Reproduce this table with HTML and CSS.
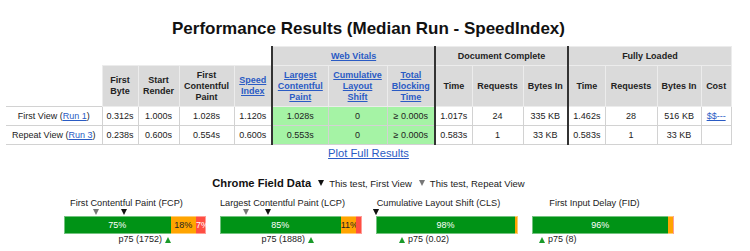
FILE: index.html
```html
<!DOCTYPE html>
<html>
<head>
<meta charset="utf-8">
<link rel="stylesheet" href="styles.css">
</head>
<body>
<div class="page">
  <h1 class="title">Performance Results (Median Run - SpeedIndex)</h1>
  <table class="results">
    <colgroup>
      <col class="w-label"><col class="w-fb"><col class="w-sr"><col class="w-fcp"><col class="w-si">
      <col class="w-lcp"><col class="w-cls"><col class="w-tbt">
      <col class="w-time"><col class="w-req"><col class="w-bytes">
      <col class="w-time2"><col class="w-req2"><col class="w-bytes2"><col class="w-cost">
    </colgroup>
    <thead>
      <tr class="group-row">
        <th class="blank" colspan="5"></th>
        <th class="group sep" colspan="3"><a href="#">Web Vitals</a></th>
        <th class="group sep" colspan="3">Document Complete</th>
        <th class="group sep" colspan="4">Fully Loaded</th>
      </tr>
      <tr class="head-row">
        <th class="blank"></th>
        <th>First<br>Byte</th>
        <th>Start<br>Render</th>
        <th>First<br>Contentful<br>Paint</th>
        <th><a href="#">Speed<br>Index</a></th>
        <th class="sep"><a href="#">Largest<br>Contentful<br>Paint</a></th>
        <th><a href="#">Cumulative<br>Layout<br>Shift</a></th>
        <th><a href="#">Total<br>Blocking<br>Time</a></th>
        <th class="sep">Time</th>
        <th>Requests</th>
        <th>Bytes In</th>
        <th class="sep">Time</th>
        <th>Requests</th>
        <th>Bytes In</th>
        <th>Cost</th>
      </tr>
    </thead>
    <tbody>
      <tr>
        <td class="label">First View (<a href="#">Run 1</a>)</td>
        <td>0.312s</td><td>1.000s</td><td>1.028s</td><td>1.120s</td>
        <td class="sep good">1.028s</td><td class="good">0</td><td class="good">&ge; 0.000s</td>
        <td class="sep">1.017s</td><td>24</td><td>335 KB</td>
        <td class="sep">1.462s</td><td>28</td><td>516 KB</td><td><a href="#">$$---</a></td>
      </tr>
      <tr>
        <td class="label">Repeat View (<a href="#">Run 3</a>)</td>
        <td>0.238s</td><td>0.600s</td><td>0.554s</td><td>0.600s</td>
        <td class="sep good">0.553s</td><td class="good">0</td><td class="good">&ge; 0.000s</td>
        <td class="sep">0.583s</td><td>1</td><td>33 KB</td>
        <td class="sep">0.583s</td><td>1</td><td>33 KB</td><td></td>
      </tr>
    </tbody>
  </table>
  <div class="plot"><a href="#">Plot Full Results</a></div>

  <div class="field-head">
    <span class="field-title">Chrome Field Data</span>
    <span class="legend"><span class="tri-down dark"></span>This test, First View</span>
    <span class="legend"><span class="tri-down grey"></span>This test, Repeat View</span>
  </div>

  <div class="metrics">
    <div class="metric">
      <div class="m-title">First Contentful Paint (FCP)</div>
      <div class="m-body">
        <div class="markers">
          <span class="tri-down grey mk" style="left:32px"></span>
          <span class="tri-down dark mk" style="left:60px"></span>
        </div>
        <div class="bar">
          <div class="seg good-seg" style="width:75%">75%</div>
          <div class="seg avg-seg" style="width:18%">18%</div>
          <div class="seg poor-seg" style="width:7%">7%</div>
        </div>
        <div class="p75row">
          <span class="p75" style="right:35px">p75 (1752)<span class="tri-up"></span></span>
        </div>
      </div>
    </div>
    <div class="metric">
      <div class="m-title">Largest Contentful Paint (LCP)</div>
      <div class="m-body">
        <div class="markers">
          <span class="tri-down grey mk" style="left:26px"></span>
          <span class="tri-down dark mk" style="left:48px"></span>
        </div>
        <div class="bar">
          <div class="seg good-seg" style="width:85%">85%</div>
          <div class="seg avg-seg" style="width:11%">11%</div>
          <div class="seg poor-seg" style="width:4%"></div>
        </div>
        <div class="p75row">
          <span class="p75" style="right:48px">p75 (1888)<span class="tri-up"></span></span>
        </div>
      </div>
    </div>
    <div class="metric">
      <div class="m-title">Cumulative Layout Shift (CLS)</div>
      <div class="m-body">
        <div class="markers">
          <span class="tri-down grey mk" style="left:0px"></span>
          <span class="tri-down dark mk" style="left:0px"></span>
        </div>
        <div class="bar">
          <div class="seg good-seg" style="width:98%">98%</div>
          <div class="seg avg-seg" style="width:2%"></div>
        </div>
        <div class="p75row">
          <span class="p75" style="left:23px"><span class="tri-up"></span>p75 (0.02)</span>
        </div>
      </div>
    </div>
    <div class="metric">
      <div class="m-title">First Input Delay (FID)</div>
      <div class="m-body">
        <div class="markers"></div>
        <div class="bar">
          <div class="seg good-seg" style="width:96%">96%</div>
          <div class="seg avg-seg" style="width:3%"></div>
          <div class="seg poor-seg" style="width:1%"></div>
        </div>
        <div class="p75row">
          <span class="p75" style="left:7px"><span class="tri-up"></span>p75 (8)</span>
        </div>
      </div>
    </div>
  </div>
</div>
</body>
</html>
```

FILE: styles.css
```css
html, body {
  margin: 0;
  padding: 0;
  background: #fff;
}
body {
  font-family: "Liberation Sans", Arial, sans-serif;
  color: #222;
}
a {
  color: #2a5bc4;
  text-decoration: underline;
}
.page {
  width: 725px;
  margin-left: 6px;
}
.title {
  margin: 19px 0 7px;
  font-size: 17px;
  line-height: 20px;
  font-weight: bold;
  text-align: center;
  color: #111;
}
.results {
  table-layout: fixed;
  border-collapse: collapse;
  width: 725px;
  font-size: 9px;
}
.w-label { width: 96px; }
.w-fb { width: 36px; }
.w-sr { width: 41px; }
.w-fcp { width: 55px; }
.w-si { width: 38px; }
.w-lcp { width: 56px; }
.w-cls { width: 59px; }
.w-tbt { width: 48px; }
.w-time { width: 37px; }
.w-req { width: 51px; }
.w-bytes { width: 45px; }
.w-time2 { width: 37px; }
.w-req2 { width: 52px; }
.w-bytes2 { width: 44px; }
.w-cost { width: 30px; }

.results th {
  background: #dadada;
  border: 1px solid #ececec;
  font-weight: bold;
  line-height: 11px;
  padding: 0;
  text-align: center;
  color: #222;
}
.results th.blank {
  background: #fff;
  border: none;
}
.group-row th {
  height: 18px;
}
.head-row th {
  height: 40px;
}
.results td {
  border: 1px solid #d2d2d2;
  height: 18px;
  padding: 0;
  text-align: center;
  line-height: 11px;
  background: #fff;
}
.results td.good {
  background: #a5f3a5;
}
.results .sep {
  border-left: 2px solid #333;
}
.results td.label {
  border-left: none;
}
.plot {
  text-align: center;
  font-size: 11.2px;
  line-height: 14px;
  margin-top: 1px;
}

.field-head {
  margin-top: 16px;
  display: flex;
  justify-content: center;
  align-items: baseline;
  line-height: 14px;
}
.field-title {
  font-size: 11.2px;
  font-weight: bold;
  color: #111;
}
.legend {
  font-size: 9.5px;
  margin-left: 7px;
  display: inline-flex;
  align-items: baseline;
}
.legend .tri-down {
  margin-right: 5px;
  position: relative;
  top: -1px;
}
.tri-down {
  display: inline-block;
  width: 0;
  height: 0;
  border-left: 3.5px solid transparent;
  border-right: 3.5px solid transparent;
  border-top: 6px solid #111;
}
.tri-down.grey {
  border-top-color: #777;
}
.tri-up {
  display: inline-block;
  width: 0;
  height: 0;
  border-left: 3.5px solid transparent;
  border-right: 3.5px solid transparent;
  border-bottom: 6px solid #1a9a2a;
}

.metrics {
  display: flex;
  padding-left: 43px;
  margin-top: 7px;
}
.metric {
  width: 156px;
  flex: none;
}
.m-title {
  font-size: 9.2px;
  line-height: 11px;
  text-align: center;
  padding-right: 1px;
}
.m-body {
  margin-left: 15px;
  width: 142px;
}
.markers {
  position: relative;
  height: 7px;
}
.mk {
  position: absolute;
  top: 0;
  margin-left: -3.5px;
}
.bar {
  position: relative;
  display: flex;
  height: 18px;
}
.bar::after {
  content: "";
  position: absolute;
  inset: 0;
  box-shadow: inset 0 0 0 1px rgba(255, 255, 255, 0.45);
  pointer-events: none;
}
.seg {
  font-size: 9px;
  line-height: 18px;
  text-align: center;
  white-space: nowrap;
  overflow: visible;
  flex: none;
}
.good-seg {
  background: #009316;
  color: #fff;
}
.avg-seg {
  background: #ffa400;
  color: #222;
}
.poor-seg {
  background: #ff4e42;
  color: #fff;
}
.p75row {
  position: relative;
  height: 11px;
}
.p75 {
  position: absolute;
  top: 0;
  display: inline-flex;
  align-items: flex-end;
  gap: 3px;
  font-size: 9px;
  line-height: 11px;
  white-space: nowrap;
  color: #222;
}
.p75 .tri-up {
  margin-bottom: 2px;
}
```
